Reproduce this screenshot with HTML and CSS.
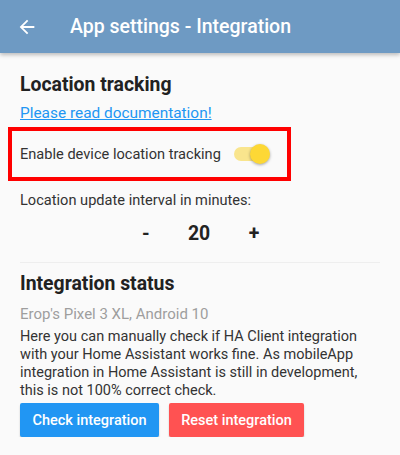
FILE: index.html
```html
<!DOCTYPE html>
<html>
<head>
<meta charset="utf-8">
<link rel="stylesheet" href="styles.css">
</head>
<body>
<div class="appbar">
  <svg class="back" width="24" height="24" viewBox="0 0 24 24"><path d="M20 11H7.83l5.59-5.59L12 4l-8 8 8 8 1.41-1.41L7.83 13H20v-2z" fill="#fff"/></svg>
  <div class="title">App settings - Integration</div>
</div>
<div class="content">
  <div class="h">Location tracking</div>
  <a class="link" href="#">Please read documentation!</a>
  <div class="highlight">
    <span class="label">Enable device location tracking</span>
    <span class="switch"><span class="track"></span><span class="knob"></span></span>
  </div>
  <div class="text interval">Location update interval in minutes:</div>
  <div class="stepper">
    <span class="btn">-</span>
    <span class="val">20</span>
    <span class="btn">+</span>
  </div>
  <div class="divider"></div>
  <div class="h h2">Integration status</div>
  <div class="device">Erop's Pixel 3 XL, Android 10</div>
  <div class="para">Here you can manually check if HA Client integration with your Home Assistant works fine. As mobileApp integration in Home Assistant is still in development, this is not 100% correct check.</div>
  <div class="buttons">
    <div class="button blue">Check integration</div>
    <div class="button red">Reset integration</div>
  </div>
</div>
</body>
</html>
```
FILE: styles.css
```css
html, body {
  margin: 0;
  padding: 0;
  background: #fafafa;
  font-family: Roboto, "Noto Sans", sans-serif;
  color: #212121;
}
.appbar {
  height: 53px;
  background: #6e9ac3;
  display: flex;
  align-items: center;
  box-shadow: 0 2px 4px rgba(0,0,0,0.25);
  position: relative;
}
.back {
  margin-left: 16px;
  width: 22px;
  height: 22px;
}
.title {
  margin-left: 32px;
  color: #fff;
  font-size: 19.5px;
  font-weight: 500;
}
.content {
  padding: 20px 20px 0 20px;
}
.h {
  font-size: 19.4px;
  font-weight: 700;
  line-height: 24px;
}
.link {
  display: block;
  margin-top: 6px;
  font-size: 15.4px;
  line-height: 20px;
  color: #2196f3;
  text-decoration: underline;
}
.highlight {
  margin-top: 4px;
  margin-left: -12px;
  width: 267px;
  height: 46px;
  border: 4px solid #ff0000;
  display: flex;
  align-items: center;
  padding-left: 8px;
  box-sizing: content-box;
}
.label {
  font-size: 14.6px;
  color: #333;
  white-space: nowrap;
}
.switch {
  position: relative;
  width: 36px;
  height: 20px;
  margin-left: 11px;
}
.track {
  position: absolute;
  left: 2px;
  top: 3px;
  width: 32px;
  height: 14px;
  border-radius: 7px;
  background: #f9e58d;
}
.knob {
  position: absolute;
  right: -2px;
  top: 0;
  width: 20px;
  height: 20px;
  border-radius: 50%;
  background: #fdd835;
  box-shadow: 0 1px 3px rgba(0,0,0,0.35);
}
.interval {
  margin-top: 9px;
  font-size: 14.6px;
  line-height: 20px;
  color: #333;
}
.stepper {
  display: flex;
  justify-content: center;
  align-items: center;
  height: 30px;
  margin-top: 8px;
  font-size: 19.4px;
  font-weight: 700;
  color: #222;
}
.btn {
  width: 30px;
  text-align: center;
}
.val {
  margin: 0 29px 0 27px;
}
.divider {
  height: 1px;
  background: #eeeeee;
  margin-top: 14px;
}
.h2 {
  margin-top: 9px;
}
.device {
  margin-top: 8px;
  font-size: 15px;
  line-height: 20px;
  color: #9e9e9e;
}
.para {
  margin-top: 4px;
  font-size: 14.5px;
  line-height: 18px;
  color: #333;
}
.buttons {
  display: flex;
  gap: 10px;
  margin-top: 3px;
}
.button {
  height: 34px;
  display: flex;
  align-items: center;
  justify-content: center;
  color: #fff;
  font-size: 14.5px;
  font-weight: 500;
  border-radius: 2px;
  box-shadow: 0 2px 2px rgba(0,0,0,0.2);
}
.blue {
  width: 139px;
  background: #2196f3;
}
.red {
  width: 135px;
  background: #ff5252;
}
```
